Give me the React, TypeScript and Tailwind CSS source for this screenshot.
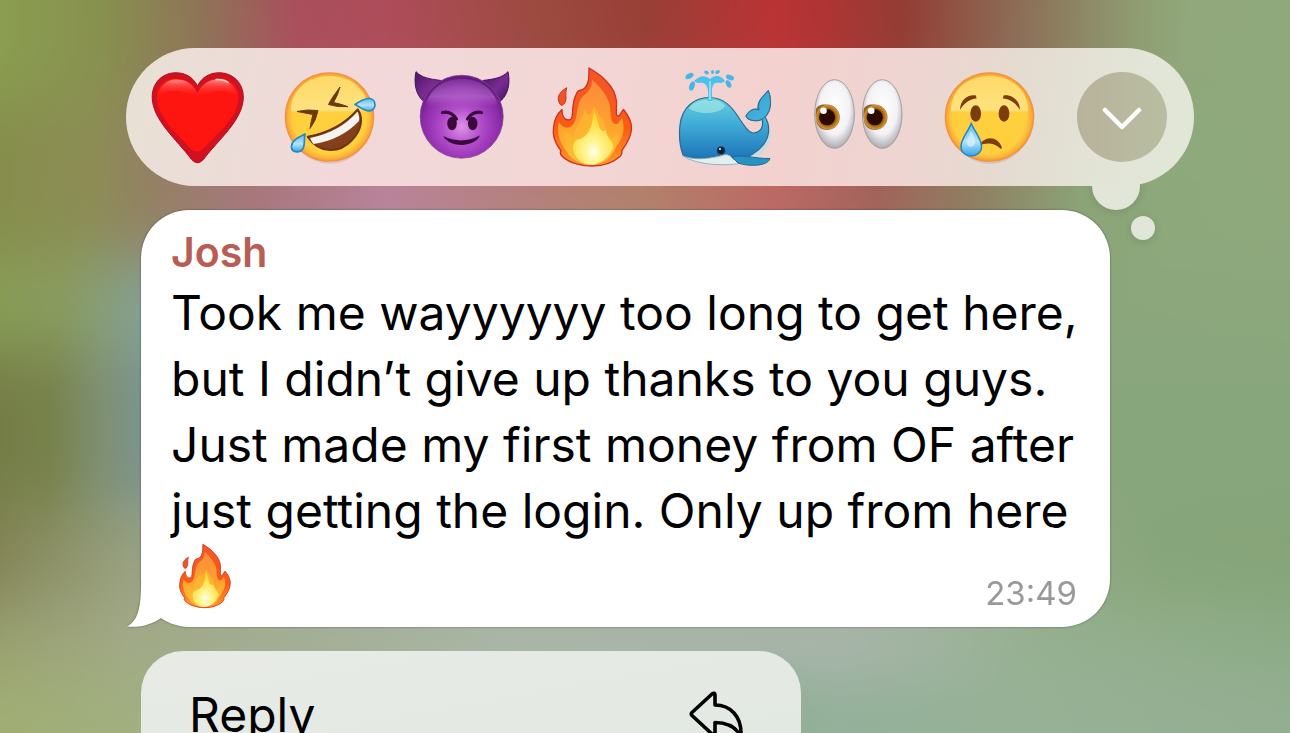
import React from "react";

// wallpaper colours, top to bottom; each band runs left to right
const bands = [
  {
    id: "top",
    y: -200,
    height: 300,
    stops: [[0, "#8a9e50"], [0.08, "#88904f"], [0.16, "#8f7258"], [0.23, "#aa4f5c"], [0.3, "#ae4c5a"], [0.42, "#9c4a40"], [0.5, "#993f36"], [0.6, "#ba3335"], [0.64, "#af3433"], [0.7, "#933d35"], [0.79, "#8c6e56"], [0.88, "#8f9c72"], [0.92, "#90a87b"], [1, "#90a97c"]],
  },
  {
    id: "upper",
    y: 100,
    height: 160,
    stops: [[0, "#868e4c"], [0.07, "#8c8d55"], [0.12, "#948064"], [0.2, "#a8767c"], [0.3, "#b9839a"], [0.4, "#b6807e"], [0.5, "#b2806a"], [0.6, "#bd6864"], [0.68, "#a2625a"], [0.75, "#907c60"], [0.84, "#8ba477"], [0.9, "#8da97b"], [1, "#8fa97d"]],
  },
  {
    id: "middle",
    y: 260,
    height: 90,
    stops: [[0, "#889e56"], [0.05, "#8a9d62"], [0.11, "#84a293"], [0.2, "#a0a0a0"], [0.82, "#8ca67c"], [1, "#8ca77c"]],
  },
  {
    id: "dark",
    y: 350,
    height: 160,
    stops: [[0, "#757d47"], [0.04, "#77824b"], [0.08, "#7e8f74"], [0.12, "#7a9596"], [0.86, "#88a67c"], [1, "#88a67c"]],
  },
  {
    id: "lower",
    y: 510,
    height: 90,
    stops: [[0, "#848557"], [0.1, "#98a07e"], [0.8, "#90aa85"], [0.9, "#87a579"], [1, "#86a478"]],
  },
  {
    id: "gray",
    y: 600,
    height: 70,
    stops: [[0, "#989f70"], [0.1, "#a2a988"], [0.2, "#a4ae96"], [0.4, "#afbab0"], [0.65, "#adb7af"], [0.72, "#a5b5a4"], [0.8, "#96b090"], [1, "#8cab85"]],
  },
  {
    id: "bottom",
    y: 670,
    height: 300,
    stops: [[0, "#a0ae74"], [0.1, "#a1af80"], [0.4, "#9ab192"], [0.6, "#90ae95"], [0.65, "#94b09a"], [0.8, "#96b195"], [1, "#93ae91"]],
  },
] as { id: string; y: number; height: number; stops: [number, string][] }[];

const Backdrop = () => {
  return (
    <svg
      className="absolute inset-0 -z-10 h-full w-full"
      viewBox="0 0 1290 733"
      preserveAspectRatio="none"
      aria-hidden="true"
    >
      <defs>
        <filter
          id="soft"
          filterUnits="userSpaceOnUse"
          x="-20"
          y="-200"
          width="1330"
          height="1200"
          colorInterpolationFilters="sRGB"
        >
          <feGaussianBlur stdDeviation="0 32" />
        </filter>
        {bands.map((band) => (
          <linearGradient id={band.id} key={band.id}>
            {band.stops.map(([offset, color]) => (
              <stop offset={offset} stopColor={color} key={offset} />
            ))}
          </linearGradient>
        ))}
      </defs>
      <g filter="url(#soft)">
        {bands.map((band) => (
          <rect key={band.id} x="0" y={band.y} width="1290" height={band.height} fill={`url(#${band.id})`} />
        ))}
      </g>
    </svg>
  );
};

const Heart = () => (
  <svg viewBox="0 0 96 96" className="size-24 overflow-visible" aria-hidden="true">
    <defs>
      <linearGradient id="heartShine" x1="0" y1="0" x2="0" y2="1">
        <stop offset="0" stopColor="#ff8a86" />
        <stop offset="0.28" stopColor="#ff4a45" />
        <stop offset="1" stopColor="#ff1510" stopOpacity="0" />
      </linearGradient>
    </defs>
    <path
      d="M47.5 17C43 8 35 3.800 26 3.800 12 3.800 2.200 14 2.200 28c0 23 25 43 39 62q6.300 7.500 12.600 0C68 71 93.300 51 93.300 28 93.300 14 83 3.800 69 3.800 60 3.800 52 8 47.500 17Z"
      fill="#d3101f"
      stroke="#a80d22"
      strokeWidth="1"
    />
    <path
      d="M47.500 24C42 13 34 9.500 26 9.500 15 9.500 7 17 7 28c0 20 20 36 33 51q7 7 14 0C68 64 88.500 48 88.500 28 88.500 17 80 9.500 69 9.500 61 9.500 53 13 47.500 24Z"
      fill="#ff1510"
    />
    <path
      d="M47.500 24C42 13 34 10.500 26 10.500 16 10.500 8.500 18 8.500 29 12 24 18 21 28 22 38 23 44 27 47.500 27 51 27 57 23 67 22 77 21 84 24 87 29 87 18 79 10.500 69 10.500 61 10.500 53 13 47.500 24Z"
      fill="url(#heartShine)"
    />
    <path d="M66 10.500q8-.5 12 3" stroke="#ffd9d7" strokeWidth="1.500" fill="none" strokeLinecap="round" />
  </svg>
);

// shared yellow head used by the laughing and crying faces
const FaceBase = ({ id }: { id: string }) => (
  <>
    <defs>
      <radialGradient id={`${id}Rim`} cx="0.5" cy="0.5" r="0.5">
        <stop offset="0.82" stopColor="#ffcf3e" />
        <stop offset="0.93" stopColor="#fcb137" />
        <stop offset="1" stopColor="#f08a3a" />
      </radialGradient>
      <linearGradient id={`${id}Top`} x1="0" y1="0" x2="0" y2="1">
        <stop offset="0" stopColor="#ffd968" />
        <stop offset="0.9" stopColor="#ffe27f" />
        <stop offset="1" stopColor="#ffd14a" stopOpacity="0" />
      </linearGradient>
      <linearGradient id={`${id}Tear`} x1="0" y1="0" x2="0" y2="1">
        <stop offset="0" stopColor="#5bbdf0" />
        <stop offset="0.55" stopColor="#b5e3fb" />
        <stop offset="1" stopColor="#38a5e6" />
      </linearGradient>
    </defs>
    <ellipse cx="48" cy="52" rx="41" ry="43" fill="#7d5a4a" opacity="0.16" />
    <circle cx="47.500" cy="48" r="44.800" fill={`url(#${id}Rim)`} />
    <path d="M9 43C8 22 25 7 47.500 7S87 22 86 43Q67 46 47.500 43 28 46 9 43Z" fill={`url(#${id}Top)`} />
  </>
);

const Rofl = () => (
  <svg viewBox="0 0 96 96" className="size-24 overflow-visible" aria-hidden="true">
    <FaceBase id="rofl" />
    <g fill="#6b3a10" stroke="#6b3a10" strokeWidth="1" strokeLinejoin="round">
      <path d="M58 18C53 25 49 30 46.500 35.500Q56 38.500 66 37.700 59 35 51.500 33.500 56 26 58 18Z" />
      <path d="M15 42.500Q25 40 36 41.500 34 52 28 59.500 29 52 31 45.500 23 44 15 42.500Z" />
    </g>
    <path d="M25.700 67.700Q57 62 75.700 40.300C82 50 79 62 70 71 58 84 38 86 25.700 67.700Z" fill="#84401a" stroke="#6a3510" strokeWidth="2" strokeLinejoin="round" />
    <path d="M28 69Q58 63 75.500 42.500 78 48 77 52 59 71 31.500 75 29 72 28 69Z" fill="#f6f3f1" />
    <g fill="url(#roflTear)" stroke="#2687ba" strokeWidth="1.700" strokeLinejoin="round">
      <path d="M73 35.500C78 32 82 29.500 87 29.500 95 29.500 95 42 87 42 82 42 78 38 73 35.500Z" />
      <path d="M23 65C17 68 10 71 9.500 77 9 84 19 85 21.500 78.500 23 74 22 69 23 65Z" />
    </g>
  </svg>
);

const Devil = () => (
  <svg viewBox="0 0 96 96" className="size-24 overflow-visible" aria-hidden="true">
    <defs>
      <radialGradient id="devilHead" cx="0.5" cy="0.62" r="0.58">
        <stop offset="0" stopColor="#dd92e8" />
        <stop offset="0.4" stopColor="#b24cca" />
        <stop offset="0.8" stopColor="#8c2aab" />
        <stop offset="1" stopColor="#661a82" />
      </radialGradient>
      <linearGradient id="devilShine" x1="0" y1="0" x2="0" y2="1">
        <stop offset="0" stopColor="#c283d4" stopOpacity="0.2" />
        <stop offset="0.65" stopColor="#bd7dcf" stopOpacity="0.5" />
        <stop offset="1" stopColor="#b873cc" stopOpacity="0" />
      </linearGradient>
      <linearGradient id="devilHorn" x1="0" y1="0" x2="1" y2="1">
        <stop offset="0" stopColor="#4b1461" />
        <stop offset="0.55" stopColor="#7a2b94" />
        <stop offset="1" stopColor="#46125c" />
      </linearGradient>
    </defs>
    <g fill="url(#devilHorn)" stroke="#45105b" strokeWidth="1" strokeLinejoin="round">
      <path d="M2 2.700C8 9 16 10 27 11.500L9.300 32C2 26-.5 14 2 2.700Z" />
      <path d="M94 2.700C88 9 80 10 69 11.500L86.500 32C94 26 96.500 14 94 2.700Z" />
    </g>
    <circle cx="47.700" cy="47.700" r="41.500" fill="url(#devilHead)" stroke="#7a4a88" strokeWidth="0.800" />
    <path d="M12 36C16 20 29 10 47.700 10S80 20 84 36Q66 39 47.700 35 30 39 12 36Z" fill="url(#devilShine)" />
    <g fill="#3a0a3d">
      <ellipse cx="38" cy="54.500" rx="4.800" ry="6.800" />
      <ellipse cx="58.700" cy="54.500" rx="4.800" ry="6.800" />
      <path d="M29 67Q47.500 76 66 66.500C60 79 36 79 29 67Z" />
    </g>
    <path d="M28.500 43.500Q37 41.500 42.500 50M67.500 43.500Q59 41.500 53.500 50" fill="none" stroke="#3a0a3d" strokeWidth="3.200" strokeLinecap="round" />
  </svg>
);

const Fire = ({ id, className }: { id: string; className: string }) => (
  <svg viewBox="0 0 96 96" className={className} aria-hidden="true">
    <defs>
      <linearGradient id={`${id}Outer`} x1="0" y1="0" x2="0" y2="1">
        <stop offset="0" stopColor="#f4552a" />
        <stop offset="0.6" stopColor="#f85c14" />
        <stop offset="1" stopColor="#ff9a2a" />
      </linearGradient>
      <linearGradient id={`${id}Mid`} x1="0" y1="0" x2="0" y2="1">
        <stop offset="0" stopColor="#fb8a3c" />
        <stop offset="0.6" stopColor="#ffa52e" />
        <stop offset="1" stopColor="#ffc53a" />
      </linearGradient>
      <radialGradient id={`${id}Core`} cx="0.5" cy="0.75" r="0.6">
        <stop offset="0" stopColor="#fffef0" />
        <stop offset="0.35" stopColor="#fff590" />
        <stop offset="1" stopColor="#ffdb3c" />
      </radialGradient>
    </defs>
    <path
      d="M43-1C50 3 57 8 61 13 67 19 70 26 70.500 33 71 40 69 47 72 47 75 47 75 42 77.500 40.500 82 46 86 52 85.500 60 85 69 80 76 75.500 82 77 83 75 86 74.500 87 66 95 56 97 45.700 97 33 97 21 93 15 86 14 84 14 83 15 82 9 74 6 67 7.500 59 8 51 11 45 16 40.500 16 46 18 51 22.500 51 26 51 26 48 26.500 44 27 36 27 31 30.500 24.500 32 20 35 22 37.500 20 43 16 43 9 43-1Z"
      fill={`url(#${id}Outer)`}
      stroke="#cf2f1d"
      strokeWidth="1.300"
      strokeLinejoin="round"
    />
    <path d="M20.700 18.700C15 22 12 26 12.300 30 12.500 33 14 36 15.700 36.500 19 35 20 32 20 29 19.500 25 20 22 20.700 18.700Z" fill="#ed5529" stroke="#cf2f1d" strokeWidth="1" />
    <path
      d="M46 11C55 18 63 29 64 38 65 45 64 53 69 55 73 56 73 52 76 49 80 61 76 71 69 79 65 92 53 95 45.700 95.500 36 95.500 25 91 21 83 14 74 10 64 13 53 15 57 20 60 24 58 31 55 30 44 33 34 36 24 46 25 46 11Z"
      fill={`url(#${id}Mid)`}
    />
    <path d="M39 39C37 51 28 58 28 68 23 66 20 62 18 61 18 73 24 85 32 92 42 96 52 96 60 91 69 84 73 74 72 64 69 68 66 70 64 68 59 64 61 59 58 53 54 47 52 45 48 37 46 46 41 50 39 39Z" fill="#ffb82f" opacity="0.750" />
    <path d="M48 43C52 49 52 56 54 60 57 63 58 62 60 61 60 70 69 72 67 79 63 89 54 95 45.700 96 36 96 27 88 27 78 28 70 32 71 36 69 45 64 46 55 48 43Z" fill={`url(#${id}Core)`} />
  </svg>
);

const Whale = () => (
  <svg viewBox="0 0 96 96" className="size-24 overflow-visible" aria-hidden="true">
    <defs>
      <linearGradient id="whaleBody" x1="0" y1="0" x2="0" y2="1">
        <stop offset="0" stopColor="#77d8dc" />
        <stop offset="0.45" stopColor="#42afd9" />
        <stop offset="1" stopColor="#1c72b8" />
      </linearGradient>
      <linearGradient id="whaleTail" x1="0" y1="0" x2="1" y2="1">
        <stop offset="0" stopColor="#3f9fd0" />
        <stop offset="1" stopColor="#43b5df" />
      </linearGradient>
    </defs>
    <path d="M60 92C77 88 90 75 91 61L93 63C92 79 82 89 70 92Z" fill="#c9dde0" />
    <path
      d="M5 86C1 75 1 65 2 56 4 38 17 28.500 31 28.500 46 28.500 54 38 61 49 67 58 71 64 76 64 83 63 86 58 84 50 80 53 70 52 68 47 71 41 77 39 80 41 79 32 84 29 90.300 21.700 94 31 93 42 87 48 93 57 91 68 86 75 79 84 68 89 60 91 54 91 51 87 46 85 31 89 17 92 5 86Z"
      fill="url(#whaleBody)"
      stroke="#286b91"
      strokeWidth="1.200"
      strokeLinejoin="round"
    />
    <path d="M5 87C18 92 33 89 43 87Q50 83 55 90L64 94C51 97 20 97 5 87Z" fill="#e5eeee" stroke="#7ba9b8" strokeWidth="0.800" />
    <path d="M84 50C80 53 70 52 68 47 71 41 77 39 81 41 79 32 84 29 90.300 21.700 94 31 93 42 87 48Z" fill="url(#whaleTail)" stroke="#27709a" strokeWidth="1" />
    <path d="M11 39C17 29 41 27 47 37 42 46 19 46 11 39Z" fill="#a8ece6" opacity="0.600" />
    <path d="M54 88C66 85 77 90 92 89.500 90 97 72 98 60 94Z" fill="#2792c4" stroke="#1b6a96" strokeWidth="1" strokeLinejoin="round" />
    <circle cx="43" cy="81.500" r="4" fill="#10202e" stroke="#17568a" strokeWidth="0.600" />
    <circle cx="42" cy="80" r="1.100" fill="#d8eef5" />
    <path d="M29.500 32C31 24 30 17 27 15 23 12 20 16 16 12 22 6 27 6 32 10 38 5 43 7 47 12 43 16 39 12 36 15 33 18 34 25 34.500 32Z" fill="#4cc1f0" />
    <path d="M32 31V12" stroke="#a5e5fa" strokeWidth="1.500" />
    <g fill="#45b6e6">
      <ellipse cx="11.500" cy="7" rx="4.400" ry="2.500" transform="rotate(-30 11.500 7)" />
      <ellipse cx="14" cy="17" rx="2.600" ry="4.700" transform="rotate(20 14 17)" />
      <ellipse cx="52" cy="8.500" rx="4.200" ry="2.500" transform="rotate(20 52 8.500)" />
      <ellipse cx="50.500" cy="15" rx="2.500" ry="4" transform="rotate(-25 50.500 15)" />
      <ellipse cx="28.500" cy="3.500" rx="2.500" ry="1.700" transform="rotate(35 28.500 3.500)" />
      <ellipse cx="34.500" cy="3" rx="1.500" ry="2" />
      <ellipse cx="39.500" cy="3" rx="2.500" ry="1.700" transform="rotate(-30 39.500 3)" />
    </g>
  </svg>
);

const Eyes = () => (
  <svg viewBox="0 0 96 96" className="size-24 overflow-visible" aria-hidden="true">
    <defs>
      <radialGradient id="eyeWhite" cx="0.5" cy="0.42" r="0.58">
        <stop offset="0" stopColor="#ffffff" />
        <stop offset="0.65" stopColor="#f3f3f5" />
        <stop offset="1" stopColor="#adabb0" />
      </radialGradient>
      <radialGradient id="eyeIris" cx="0.5" cy="0.5" r="0.5">
        <stop offset="0.5" stopColor="#4e1d04" />
        <stop offset="0.7" stopColor="#a8690f" />
        <stop offset="0.92" stopColor="#cf9330" />
        <stop offset="1" stopColor="#946022" />
      </radialGradient>
    </defs>
    {[0, 47.7].map((x) => (
      <g key={x} transform={`translate(${x} 0)`}>
        <ellipse cx="24.500" cy="45" rx="19.800" ry="34.300" fill="url(#eyeWhite)" stroke="#9c989c" strokeWidth="0.900" />
        <path d="M6 40C9 35 13 35.500 17 35.500A12.500 12.500 0 0 1 17 61C12 61 8 58 6.500 53Q5 46 6 40Z" fill="url(#eyeIris)" />
        <circle cx="17" cy="48.300" r="8" fill="#2a0a02" />
        <circle cx="13.500" cy="41.700" r="3.300" fill="#fff" />
      </g>
    ))}
  </svg>
);

const Cry = () => (
  <svg viewBox="0 0 96 96" className="size-24 overflow-visible" aria-hidden="true">
    <FaceBase id="cry" />
    <g fill="#7c3d0c">
      <ellipse cx="33.700" cy="44.500" rx="5.400" ry="8.300" />
      <ellipse cx="62" cy="44.500" rx="5.400" ry="8.300" />
      <path d="M18 41C18 31 26 25 34 26.500L34.500 29.500C28 30 22 34 18 41Z" />
      <path d="M78 41C78 31 69 25 61.500 26.500L61 29.500C68 30 74 34 78 41Z" />
      <path d="M37 77C42 67 55 66 60 78.500L59 80C52 74 45 73 37 77Z" />
    </g>
    <path d="M29.200 54.500C33 63 39.500 70 39.500 77.500 39.500 90 19 90 19 77.500 19 70 26 63 29.200 54.500Z" fill="url(#cryTear)" stroke="#1f86c4" strokeWidth="1.500" />
    <path d="M29 62C33 69 35 74 31 77 27 79 24 76 25 72Z" fill="#dbf1fb" opacity="0.700" />
  </svg>
);

const ReplyIcon = () => (
  <svg
    viewBox="0 0 54 48"
    className="h-12 w-[54px]"
    fill="none"
    stroke="#000"
    strokeWidth="3.600"
    strokeLinejoin="round"
    aria-hidden="true"
  >
    <path d="M3 21.500 23 3Q26 1 26 4V14C42 14 52 26 52 42Q52 45 50 42 42 31.500 26 31.500V42Q26 45 23 43L3 24.500Q1.500 23 3 21.500Z" />
  </svg>
);

const reactions = [
  { name: "Love", icon: <Heart /> },
  { name: "Laugh", icon: <Rofl /> },
  { name: "Devil", icon: <Devil /> },
  { name: "Fire", icon: <Fire id="reactFire" className="size-24 overflow-visible" /> },
  { name: "Whale", icon: <Whale /> },
  { name: "Eyes", icon: <Eyes /> },
  { name: "Cry", icon: <Cry /> },
];

const ReactionBar = () => {
  return (
    <div className="relative isolate">
      <div className="flex items-center justify-between rounded-full px-6 py-[21px] bg-[linear-gradient(100deg,#e8e1d5_0%,#ecdcd7_11%,#f3d8da_22%,#f2d7d6_40%,#f3d1cf_60%,#eed5d1_73%,#e5dbd0_82%,#e2e4d6_91%,#e1e7d8_100%)]">
        {reactions.map((item) => (
          <button type="button" key={item.name} aria-label={item.name} className="size-24">
            {item.icon}
          </button>
        ))}
        <button type="button" aria-label="More reactions" className="flex size-24 items-center justify-center">
          <span className="flex size-[90px] items-center justify-center rounded-full bg-gradient-to-r from-[#b9b29a] to-[#b8bea2]">
            <svg viewBox="0 0 40 24" className="mt-1 h-6 w-10" fill="none" stroke="#fff" strokeWidth="4.500" strokeLinecap="round" strokeLinejoin="round" aria-hidden="true">
              <path d="M3 3 20 20 37 3" />
            </svg>
          </span>
        </button>
      </div>
      <div className="absolute right-[54px] -bottom-6 -z-10 size-12 rounded-full bg-[#e1e6d8] shadow-[0_2px_10px_rgba(0,0,0,0.12)]" />
      <div className="absolute right-[39px] -bottom-[54px] size-6 rounded-full bg-[#e1e6d8] shadow-[0_2px_10px_rgba(0,0,0,0.12)]" />
    </div>
  );
};

const Message = () => {
  return (
    <div className="relative mt-6 mr-[84px] ml-[15px] drop-shadow-[0_0_1px_rgba(0,0,0,0.4)]">
      <svg viewBox="0 0 44 44" className="absolute bottom-0 -left-[15px] size-11 fill-white" aria-hidden="true">
        <path d="M15 0C15 28 11 38 1 43.500 14 45 27 41 35 35L40 20 20 0Z" />
      </svg>
      <div className="rounded-[48px] bg-white pt-[14px] pr-[33px] pb-4 pl-[30px]">
        <h2 className="text-[41px] leading-[56px] font-semibold text-[#b85c54]">Josh</h2>
        <p className="text-[48px] leading-[66px] whitespace-nowrap text-black">
          Took me wayyyyyy too long to get here,
          <br />
          but I didn’t give up thanks to you guys.
          <br />
          Just made my first money from OF after
          <br />
          just getting the login. Only up from here
        </p>
        <div className="flex h-[67px] items-end justify-between pl-1">
          <Fire id="textFire" className="size-[62px] mb-1 overflow-visible" />
          <time className="text-[33px] leading-[36px] text-[#999999]">23:49</time>
        </div>
      </div>
    </div>
  );
};

const App = () => {
  return (
    <main className="relative isolate h-screen overflow-hidden pt-12 pr-24 pl-[126px] font-[Inter,sans-serif]">
      <Backdrop />
      <div className="w-full max-w-[1068px]">
        <ReactionBar />
        <Message />
        <div className="mt-6 ml-[15px] max-w-[660px] overflow-hidden rounded-[42px] bg-[linear-gradient(170deg,#e8ebe5,#e4e9e4_60%,#e0e8df)]">
          <button type="button" className="flex h-32 w-full items-center justify-between pr-[58px] pl-12 text-[48px] text-black">
            Reply
            <ReplyIcon />
          </button>
        </div>
      </div>
    </main>
  );
};

export default App;
